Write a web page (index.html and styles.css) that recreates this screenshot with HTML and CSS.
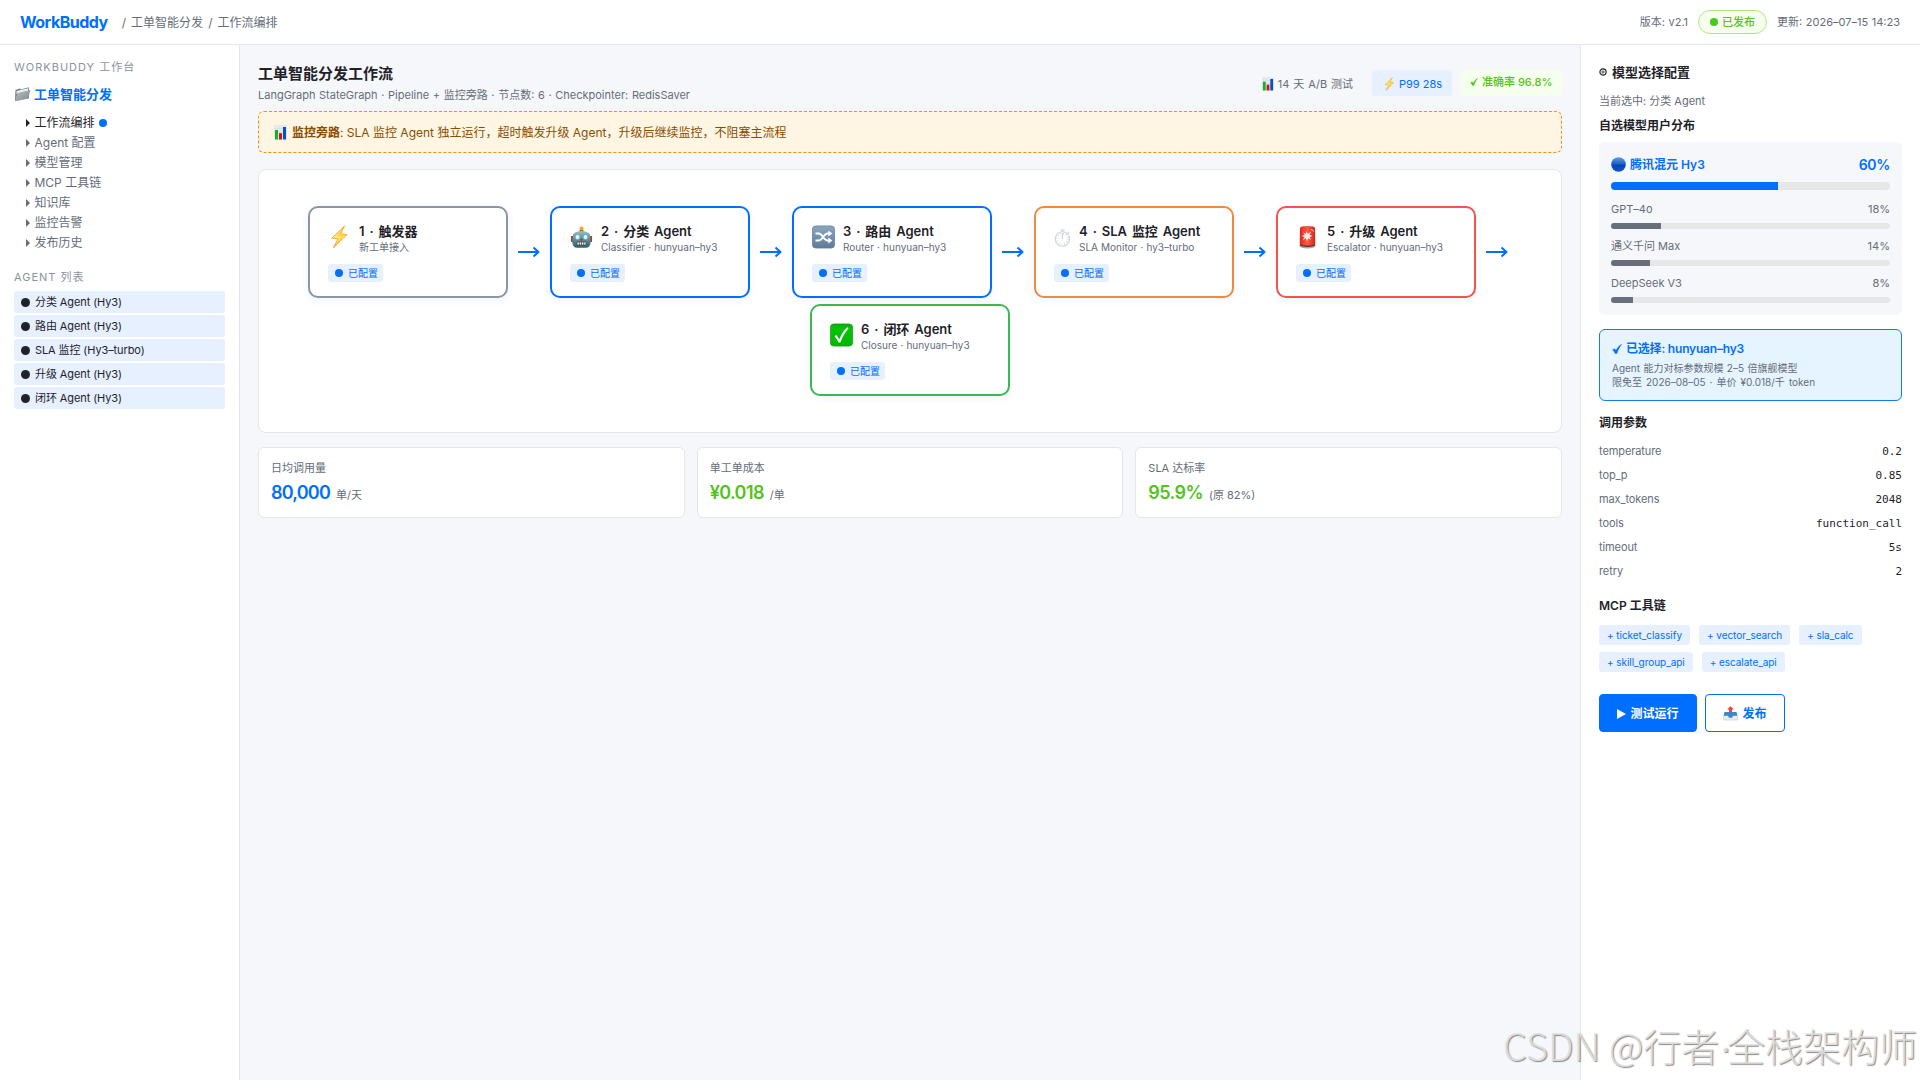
FILE: index.html
```html
<!DOCTYPE html>
<html lang="zh-CN">
<head>
<meta charset="UTF-8">
<title>WorkBuddy</title>
<link rel="stylesheet" href="styles.css">
</head>
<body>
<svg class="defs" width="0" height="0" aria-hidden="true">
  <defs>
    <linearGradient id="gBolt" x1="0" y1="0" x2="0" y2="1"><stop offset="0" stop-color="#ffb62e"/><stop offset=".5" stop-color="#ffdf58"/><stop offset="1" stop-color="#f59a16"/></linearGradient>
    <linearGradient id="gBox" x1="0" y1="0" x2="0" y2="1"><stop offset="0" stop-color="#8aa6bf"/><stop offset="1" stop-color="#5f7c97"/></linearGradient>
    <linearGradient id="gGreen" x1="0" y1="0" x2="0" y2="1"><stop offset="0" stop-color="#12a812"/><stop offset=".2" stop-color="#05c405"/><stop offset="1" stop-color="#02b602"/></linearGradient>
    <linearGradient id="gBall" x1="0" y1="0" x2="0" y2="1"><stop offset="0" stop-color="#5d9be8"/><stop offset=".45" stop-color="#1f63c8"/><stop offset=".55" stop-color="#0a44ae"/><stop offset="1" stop-color="#0b57d6"/></linearGradient>
    <linearGradient id="gFolder" x1="0" y1="0" x2="1" y2="1"><stop offset="0" stop-color="#b9c3c7"/><stop offset="1" stop-color="#7d898f"/></linearGradient>
    <linearGradient id="gSiren" x1="0" y1="0" x2="1" y2="0"><stop offset="0" stop-color="#d92a1c"/><stop offset=".5" stop-color="#ff5a45"/><stop offset="1" stop-color="#c9271b"/></linearGradient>
    <linearGradient id="gRobot" x1="0" y1="0" x2="0" y2="1"><stop offset="0" stop-color="#a9b9bf"/><stop offset=".5" stop-color="#5c8f9b"/><stop offset="1" stop-color="#2c6270"/></linearGradient>
    <symbol id="bolt" viewBox="0 0 17 24"><path d="M13.5 1 .8 13.2l6.3.6L2.2 23 16 9.6l-6.400-.7z" fill="url(#gBolt)" stroke="#f5a11c" stroke-width=".8" stroke-linejoin="round"/><path d="M11 4.500 3.500 12.200l5.300.5-3.300 6" fill="none" stroke="#fff0a0" stroke-width=".8"/></symbol>
    <symbol id="chart" viewBox="0 0 13 15"><path d="M0 0h13v15H0z" fill="#e4eaf1"/><path d="M0 3.500h13M0 7h13M0 11h13" stroke="#cdd7e2" stroke-width=".6"/><path d="M1 5h3v9.500H1z" fill="#12b61c"/><path d="M5 8.200h3v6.300H5z" fill="#c4161c"/><path d="M9 2h3v12.500H9z" fill="#0b4fc0"/></symbol>
    <symbol id="check" viewBox="0 0 10 10"><path d="M.5 5.800 2.800 4.800 4 6.600C5.200 4 7 1.600 9.600.3 7.400 3.200 6 6 4.900 9.500H3.100C2.500 7.800 1.700 6.600.5 5.800z" fill="currentColor" stroke="currentColor" stroke-width=".4"/></symbol>
    <symbol id="arrow" viewBox="0 0 22 12"><path d="M0 6h20M15.500 1.500 20.500 6l-5 4.500" fill="none" stroke="#006eff" stroke-width="2" stroke-linejoin="round"/></symbol>
  </defs>
</svg>

<header class="topbar">
  <span class="logo">WorkBuddy</span>
  <span class="crumbs">/ 工单智能分发 / 工作流编排</span>
  <div class="meta">
    <span class="version">版本: v2.1</span>
    <span class="published"><i class="dot"></i><span>已发布</span></span>
    <span class="updated">更新: 2026–07–15 14:23</span>
  </div>
</header>

<div class="layout">
  <aside class="sidebar">
    <div class="side-label">WORKBUDDY 工作台</div>
    <div class="project">
      <svg width="17" height="16" viewBox="0 0 17 16"><path d="M1.500 4 6 2.600l1 .8L14.500 1.200l.5 3v8L1 15z" fill="#6d787e"/><path d="M2.500 5 14 2.300v3L2.500 8z" fill="#eef2f3"/><path d="M3.200 7 16.500 4 14.200 12.600 1 15.300z" fill="url(#gFolder)"/></svg>
      <span>工单智能分发</span>
    </div>
    <ul class="tree">
      <li class="current"><i class="tri"></i><span>工作流编排</span><i class="dot"></i></li>
      <li><i class="tri"></i><span>Agent 配置</span></li>
      <li><i class="tri"></i><span>模型管理</span></li>
      <li><i class="tri"></i><span>MCP 工具链</span></li>
      <li><i class="tri"></i><span>知识库</span></li>
      <li><i class="tri"></i><span>监控告警</span></li>
      <li><i class="tri"></i><span>发布历史</span></li>
    </ul>
    <div class="side-label">AGENT 列表</div>
    <ul class="agents">
      <li><i class="dot"></i><span>分类 Agent (Hy3)</span></li>
      <li><i class="dot"></i><span>路由 Agent (Hy3)</span></li>
      <li><i class="dot"></i><span>SLA 监控 (Hy3–turbo)</span></li>
      <li><i class="dot"></i><span>升级 Agent (Hy3)</span></li>
      <li><i class="dot"></i><span>闭环 Agent (Hy3)</span></li>
    </ul>
  </aside>

  <main class="main">
    <div class="head">
      <div>
        <h1>工单智能分发工作流</h1>
        <p class="sub">LangGraph StateGraph · Pipeline + 监控旁路 · 节点数: 6 · Checkpointer: RedisSaver</p>
      </div>
      <div class="badges">
        <span class="badge plain"><svg width="12" height="14"><use href="#chart"/></svg><span>14 天 A/B 测试</span></span>
        <span class="badge blue"><svg width="11" height="14"><use href="#bolt"/></svg><span>P99 28s</span></span>
        <span class="badge green"><svg width="8" height="10"><use href="#check"/></svg><span>准确率 96.8%</span></span>
      </div>
    </div>

    <div class="notice">
      <svg width="13" height="15"><use href="#chart"/></svg>
      <span class="notice-text"><b>监控旁路</b>: SLA 监控 Agent 独立运行，超时触发升级 Agent，升级后继续监控，不阻塞主流程</span>
    </div>

    <section class="canvas">
      <article class="node gray">
        <div class="node-head">
          <svg class="ico" width="23" height="24" viewBox="-3 0 23 24"><use href="#bolt" width="17" height="24"/></svg>
          <div><h3>1 · 触发器</h3><p>新工单接入</p></div>
        </div>
        <span class="tag"><i class="dot"></i><span>已配置</span></span>
      </article>
      <span class="link"><svg width="22" height="12"><use href="#arrow"/></svg></span>
      <article class="node blue">
        <div class="node-head">
          <svg class="ico" width="23" height="24" viewBox="0 0 23 24"><circle cx="11.500" cy="3.500" r="2" fill="#f6a81c"/><path d="M9.500 5h4v2h-4z" fill="#8b6d4a"/><path d="M1 11h2v6H1zM20 11h2v6h-2z" fill="#c0392b"/><path d="M3 9.500Q5 6 11.500 6T20 9.500l.6 8.500q-.6 4.500-4.600 4.800H7Q3 22.500 2.400 18z" fill="url(#gRobot)"/><circle cx="7.500" cy="12" r="2.500" fill="#e9fbff" stroke="#35b7d8"/><circle cx="15.500" cy="12" r="2.500" fill="#e9fbff" stroke="#35b7d8"/><circle cx="11.500" cy="14.600" r="1.200" fill="#d5281c"/><path d="M7 17h9v3H7z" fill="#efe9df" stroke="#3a2b2b" stroke-width=".6"/><path d="M9.300 17v3M11.500 17v3M13.700 17v3" stroke="#3a2b2b" stroke-width=".6"/></svg>
          <div><h3>2 · 分类 Agent</h3><p>Classifier · hunyuan–hy3</p></div>
        </div>
        <span class="tag"><i class="dot"></i><span>已配置</span></span>
      </article>
      <span class="link"><svg width="22" height="12"><use href="#arrow"/></svg></span>
      <article class="node blue">
        <div class="node-head">
          <svg class="ico" width="23" height="24" viewBox="0 0 23 24"><rect x=".4" y=".9" width="22.200" height="22.200" rx="3.500" fill="url(#gBox)" stroke="#5c7993" stroke-width=".7"/><path d="M3.500 8.500h3.200c4 0 4.800 7 9 7h1.800M3.500 15.500h3.200c4 0 4.800-7 9-7h1.800" fill="none" stroke="#fff" stroke-width="1.900"/><path d="m16.300 5.400 4 3.100-4 3.100zM16.300 12.400l4 3.100-4 3.100z" fill="#fff"/></svg>
          <div><h3>3 · 路由 Agent</h3><p>Router · hunyuan–hy3</p></div>
        </div>
        <span class="tag"><i class="dot"></i><span>已配置</span></span>
      </article>
      <span class="link"><svg width="22" height="12"><use href="#arrow"/></svg></span>
      <article class="node orange">
        <div class="node-head">
          <svg class="ico" width="17" height="24" viewBox="0 0 17 24"><g fill="none" stroke="#cdd1d6"><circle cx="8.500" cy="14" r="7.200" stroke-width="1.100"/><circle cx="8.500" cy="14" r="5.400" stroke-width="1.600" stroke-dasharray=".8 2.030"/><path d="M8.500 14V8.500M6.500 5h4M8.500 5v2M14 7l1.300 1.300" stroke-width="1.200"/></g></svg>
          <div><h3>4 · SLA 监控 Agent</h3><p>SLA Monitor · hy3–turbo</p></div>
        </div>
        <span class="tag"><i class="dot"></i><span>已配置</span></span>
      </article>
      <span class="link"><svg width="22" height="12"><use href="#arrow"/></svg></span>
      <article class="node red">
        <div class="node-head">
          <svg class="ico" width="23" height="24" viewBox="0 0 23 24"><ellipse cx="11.500" cy="20.800" rx="8.300" ry="2.700" fill="#a5a9ac"/><ellipse cx="11.500" cy="19.800" rx="7.800" ry="2.100" fill="#63302c"/><path d="M4 3q0-2 7.500-2T19 3l.3 15.500q-1 2-7.800 2t-7.800-2z" fill="url(#gSiren)"/><path d="m10.500 6 1.200 2.800 3.600-2-1.900 3.300 3.200.7-3 1.400 1.500 2.600-3.100-1.300-1 3-1.100-3.200-2.900 1.600 1.500-2.900-3-1 3.100-1-1.300-2.600 2.700 1.400z" fill="#ffe9e4"/><path d="M15 4.500q2 .3 2.500 2" fill="none" stroke="#ffd2c8" stroke-width="1"/></svg>
          <div><h3>5 · 升级 Agent</h3><p>Escalator · hunyuan–hy3</p></div>
        </div>
        <span class="tag"><i class="dot"></i><span>已配置</span></span>
      </article>
      <span class="link"><svg width="22" height="12"><use href="#arrow"/></svg></span>
      <article class="node done">
        <div class="node-head">
          <svg class="ico" width="23" height="24" viewBox="0 0 23 24"><rect x=".4" y=".9" width="22.200" height="22.200" rx="3.500" fill="url(#gGreen)" stroke="#0a9a12" stroke-width=".7"/><path d="M4.500 13.200 6.300 12q2 2.300 3 4.500Q12 9 17.300 4.300l1.200.9Q13.500 11 10.300 19.500H8.700Q7 15.800 4.500 13.200z" fill="#fff"/></svg>
          <div><h3>6 · 闭环 Agent</h3><p>Closure · hunyuan–hy3</p></div>
        </div>
        <span class="tag"><i class="dot"></i><span>已配置</span></span>
      </article>
    </section>

    <section class="stats">
      <div class="stat"><div class="stat-label">日均调用量</div><div class="stat-value"><b class="c-blue">80,000</b><span>单/天</span></div></div>
      <div class="stat"><div class="stat-label">单工单成本</div><div class="stat-value"><b class="c-green">¥0.018</b><span>/单</span></div></div>
      <div class="stat"><div class="stat-label">SLA 达标率</div><div class="stat-value"><b class="c-green">95.9%</b><span>(原 82%)</span></div></div>
    </section>
  </main>

  <aside class="panel">
    <h2><svg width="8" height="8" viewBox="0 0 8 8"><circle cx="4" cy="4" r="3.100" fill="none" stroke="#1f2329" stroke-width="1.200"/><circle cx="4" cy="4" r="1.100" fill="none" stroke="#1f2329" stroke-width=".8"/></svg><span>模型选择配置</span></h2>
    <p class="selected-agent">当前选中: 分类 Agent</p>
    <h4>自选模型用户分布</h4>
    <div class="share">
      <div class="share-top"><svg width="15" height="15" viewBox="0 0 15 15"><circle cx="7.500" cy="7.500" r="7.300" fill="url(#gBall)"/></svg><span class="name">腾讯混元 Hy3</span><span class="pct">60%</span></div>
      <div class="bar big"><i style="width:60%"></i></div>
      <div class="share-row"><span>GPT–4o</span><span>18%</span></div>
      <div class="bar"><i style="width:18%"></i></div>
      <div class="share-row"><span>通义千问 Max</span><span>14%</span></div>
      <div class="bar"><i style="width:14%"></i></div>
      <div class="share-row"><span>DeepSeek V3</span><span>8%</span></div>
      <div class="bar"><i style="width:8%"></i></div>
    </div>
    <div class="picked">
      <div class="picked-title"><svg width="10" height="10"><use href="#check"/></svg><span>已选择: hunyuan–hy3</span></div>
      <p class="l1">Agent 能力对标参数规模 2–5 倍旗舰模型</p>
      <p class="l2">限免至 2026–08–05 · 单价 ¥0.018/千 token</p>
    </div>
    <h4 class="params-title">调用参数</h4>
    <dl class="params">
      <div><dt>temperature</dt><dd>0.2</dd></div>
      <div><dt>top_p</dt><dd>0.85</dd></div>
      <div><dt>max_tokens</dt><dd>2048</dd></div>
      <div><dt>tools</dt><dd>function_call</dd></div>
      <div><dt>timeout</dt><dd>5s</dd></div>
      <div><dt>retry</dt><dd>2</dd></div>
    </dl>
    <h4 class="tools-title">MCP 工具链</h4>
    <div class="tools">
      <span>+ ticket_classify</span><span>+ vector_search</span><span>+ sla_calc</span><span>+ skill_group_api</span><span>+ escalate_api</span>
    </div>
    <div class="actions">
      <button class="btn primary"><svg width="9" height="10" viewBox="0 0 9 10"><path d="M0 0 9 5 0 10z" fill="#fff"/></svg><span>测试运行</span></button>
      <button class="btn"><svg width="15" height="15" viewBox="0 0 15 15"><path d="M.5 9.500h14V14H.5z" fill="#e9ebec" stroke="#c8ccce" stroke-width=".6"/><path d="M1.500 6h12l1 3.800H10L9 11.800H6L5 9.800H.5z" fill="#3f86c4"/><path d="M7.500.2 11 3.600H9V6H6V3.600H4z" fill="#f0483e"/></svg><span>发布</span></button>
    </div>
  </aside>
</div>
<div class="watermark">CSDN @行者<span class="mid">·</span>全栈架构师</div>
</body>
</html>
```
FILE: styles.css
```css
* { box-sizing: border-box; margin: 0; padding: 0; }
body {
  width: 1920px; height: 1080px; overflow: hidden;
  font-family: Inter, "Noto Sans CJK SC", sans-serif;
  font-size: 12px; line-height: 20px; color: #1f2329; background: #f6f7fa;
  display: flex; flex-direction: column;
}
ul { list-style: none; }
i { font-style: normal; }
svg, .dot { display: block; flex: none; }
.defs { position: absolute; }
span, h1, h2, h3, h4, p { white-space: nowrap; }
h1, h2, h3, h4, b { font-weight: 600; }
.dot { width: 8px; height: 8px; border-radius: 50%; background: currentColor; }

.topbar { height: 45px; flex: none; display: flex; align-items: center; padding: 0 20px; background: #fff; border-bottom: 1px solid #e5e6e8; color: #656d78; }
.logo { font-size: 16px; font-weight: 700; letter-spacing: -.5px; color: #006eff; margin-right: 14px; }
.crumbs { padding-top: 2px; word-spacing: 1.700px; }
.meta { margin-left: auto; display: flex; align-items: center; gap: 10px; font-size: 11px; }
.version { word-spacing: .6px; }
.published { display: flex; align-items: center; gap: 4px; width: 69px; height: 24px; padding-left: 11px; border: 1px solid #b0e887; border-radius: 12px; background: #f6ffed; color: #52c41a; font-weight: 500; }
.updated { word-spacing: .5px; }

.layout { flex: 1; display: flex; min-height: 0; }
.sidebar { width: 240px; padding: 12px 14px; background: #fff; border-right: 1px solid #e5e6e8; }
.side-label { font-size: 11px; letter-spacing: 1px; color: #8b939e; }
.project { display: flex; align-items: center; gap: 3px; height: 26px; margin: 4px 0 6px; font-size: 13px; font-weight: 600; color: #006eff; }
.tree { padding-left: 12px; margin-bottom: 14px; color: #656d78; }
.tree li { display: flex; align-items: center; height: 20px; }
.tree .current { color: #1f2329; }
.tri { width: 0; height: 0; border: 4px solid transparent; border-left: 4px solid currentColor; border-right: 0; margin-right: 4.500px; }
.tree .dot { background: #006eff; margin-left: 4.500px; }
.agents { margin-top: 4px; display: flex; flex-direction: column; gap: 2px; }
.agents li { display: flex; align-items: center; gap: 5px; height: 22px; padding-left: 7px; border-radius: 3px; background: #e6f0ff; font-size: 11px; letter-spacing: -.1px; }
.agents .dot { width: 9px; height: 9px; }

.main { flex: 1; padding: 18px; min-width: 0; }
.head { display: flex; justify-content: space-between; height: 48px; }
h1 { font-size: 15px; line-height: 22px; }
.sub { font-size: 11px; line-height: 20px; color: #656d78; word-spacing: .55px; }
.badges { display: flex; gap: 8px; padding-top: 7px; font-size: 11px; }
.badge { display: flex; align-items: center; gap: 5px; height: 26px; border-radius: 4px; }
.plain { color: #656d78; padding: 2px 11px 0 0; word-spacing: .8px; }
.plain svg { margin-right: -1px; }
.badge.blue { width: 80px; padding: 2px 0 0 12px; gap: 4px; background: #e6f0ff; color: #006eff; }
.badge.green { width: 102px; padding: 0 0 3px 10px; gap: 4px; background: #f6ffed; color: #52c41a; font-weight: 500; }
.notice { height: 42px; display: flex; align-items: center; gap: 5px; padding: 1px 0 0 15px; border: 1px dashed #fa8c16; border-radius: 6px; background: #fff5e3; color: #874d00; }

.canvas { height: 264px; margin-top: 16px; padding: 36px 0; display: flex; flex-wrap: wrap; justify-content: center; align-content: flex-start; gap: 6px; background: #fff; border: 1px solid #e5e6e8; border-radius: 8px; }
.node { width: 200px; height: 92px; padding: 14px 18px; border: 2px solid; border-radius: 10px; background: #fff; box-shadow: 0 2px 8px rgba(0, 80, 255, .07); }
.node.gray { border-color: #8b95a3; }
.node.blue { border-color: #006eff; }
.node.orange { border-color: #f08a3c; }
.node.red { border-color: #f9514b; }
.node.done { border-color: #3cb853; }
.node-head { display: flex; gap: 8px; height: 42px; color: #1f2329; }
.ico { margin-top: 3px; }
.node h3 { font-size: 13px; line-height: 18px; word-spacing: 1.800px; letter-spacing: -.05px; }
.node p { font-size: 10px; line-height: 14px; color: #656d78; word-spacing: .3px; }
.tag { display: flex; align-items: center; gap: 5px; width: 55px; height: 18px; padding-left: 7px; border-radius: 3px; background: #e6f0ff; color: #006eff; font-size: 10px; }
.link { width: 30px; height: 92px; display: flex; align-items: center; justify-content: center; }

.stats { display: grid; grid-template-columns: repeat(3, 1fr); gap: 12px; margin-top: 14px; }
.stat { height: 71px; padding: 11px 12px; background: #fff; border: 1px solid #e5e6e8; border-radius: 6px; }
.stat-label { font-size: 11px; line-height: 18px; color: #656d78; }
.stat-value { display: flex; align-items: baseline; gap: 6px; line-height: 32px; }
.stat-value b { font-size: 18px; letter-spacing: -.6px; }
.stat-value b.c-blue { letter-spacing: -.8px; }
.stat-value span { font-size: 11px; color: #656d78; }
.c-blue { color: #006eff; }
.c-green { color: #52c41a; }

.panel { width: 340px; padding: 17px 18px; background: #fff; border-left: 1px solid #e5e6e8; }
.panel h2 { display: flex; align-items: center; gap: 5px; font-size: 13px; line-height: 20px; }
.selected-agent { font-size: 11px; margin-top: 9px; color: #656d78; }
h4 { font-size: 12px; line-height: 20px; }
.selected-agent + h4 { margin-top: 5px; }
.share { height: 173px; margin-top: 6px; padding: 12px; border-radius: 6px; background: #f6f7fa; }
.share-top { display: flex; align-items: center; height: 21px; gap: 4px; color: #006eff; font-weight: 600; }
.share-top .pct { margin-left: auto; font-size: 14px; letter-spacing: -.3px; }
.bar { height: 6px; border-radius: 3px; overflow: hidden; background: #e7e7e7; }
.bar i { display: block; height: 100%; background: #666f7a; }
.bar.big { height: 8px; margin: 7px 0 8px; border-radius: 4px; }
.bar.big i { background: #006eff; }
.share-row { display: flex; justify-content: space-between; height: 31px; padding-top: 10px; line-height: 15px; font-size: 11px; color: #656d78; }
.share .bar.big + .share-row { height: 25px; padding-top: 4px; }
.picked { height: 72px; margin-top: 14px; padding: 9px 12px; border: 1px solid #1677ff; border-radius: 6px; background: #e6f4ff; }
.picked-title { display: flex; align-items: center; gap: 4px; line-height: 20px; font-weight: 600; letter-spacing: -.2px; color: #006eff; }
.picked p { font-size: 10px; line-height: 14px; color: #656d78; }
.picked .l1 { margin-top: 2px; word-spacing: .6px; }
.picked .l2 { word-spacing: 1.200px; }
.params-title { margin-top: 12px; }
.params { margin-top: 7px; font-size: 11px; }
.params div { display: flex; justify-content: space-between; height: 24px; line-height: 24px; }
.params dt { color: #656d78; line-height: 23px; letter-spacing: -.1px; }
.params dd { font-family: "DejaVu Sans Mono", monospace; }
.tools-title { margin-top: 12px; }
.tools { display: flex; flex-wrap: wrap; gap: 7px 9px; margin-top: 9px; }
.tools span { height: 20px; padding: 0 8px; border-radius: 3px; background: #e6f0ff; color: #006eff; font-size: 10px; letter-spacing: -.05px; }
.actions { display: flex; gap: 8px; margin-top: 22px; }
.btn { display: flex; align-items: center; justify-content: center; gap: 4px; width: 80px; height: 38px; padding-top: 1px; border: 1px solid #006eff; border-radius: 4px; background: #fff; color: #006eff; font: 600 12px/20px Inter, "Noto Sans CJK SC", sans-serif; }
.btn.primary { width: 98px; background: #006eff; color: #fff; }
.watermark { position: absolute; left: 1503px; top: 1017px; line-height: 56px; font-family: "Noto Sans CJK SC", sans-serif; font-weight: 300; font-size: 38px; white-space: nowrap; color: rgba(225, 225, 225, .9); text-shadow: 1px 1px 1px rgba(110, 110, 110, .8); }
.mid { font-family: "Liberation Sans", sans-serif; letter-spacing: -5px; }
```
